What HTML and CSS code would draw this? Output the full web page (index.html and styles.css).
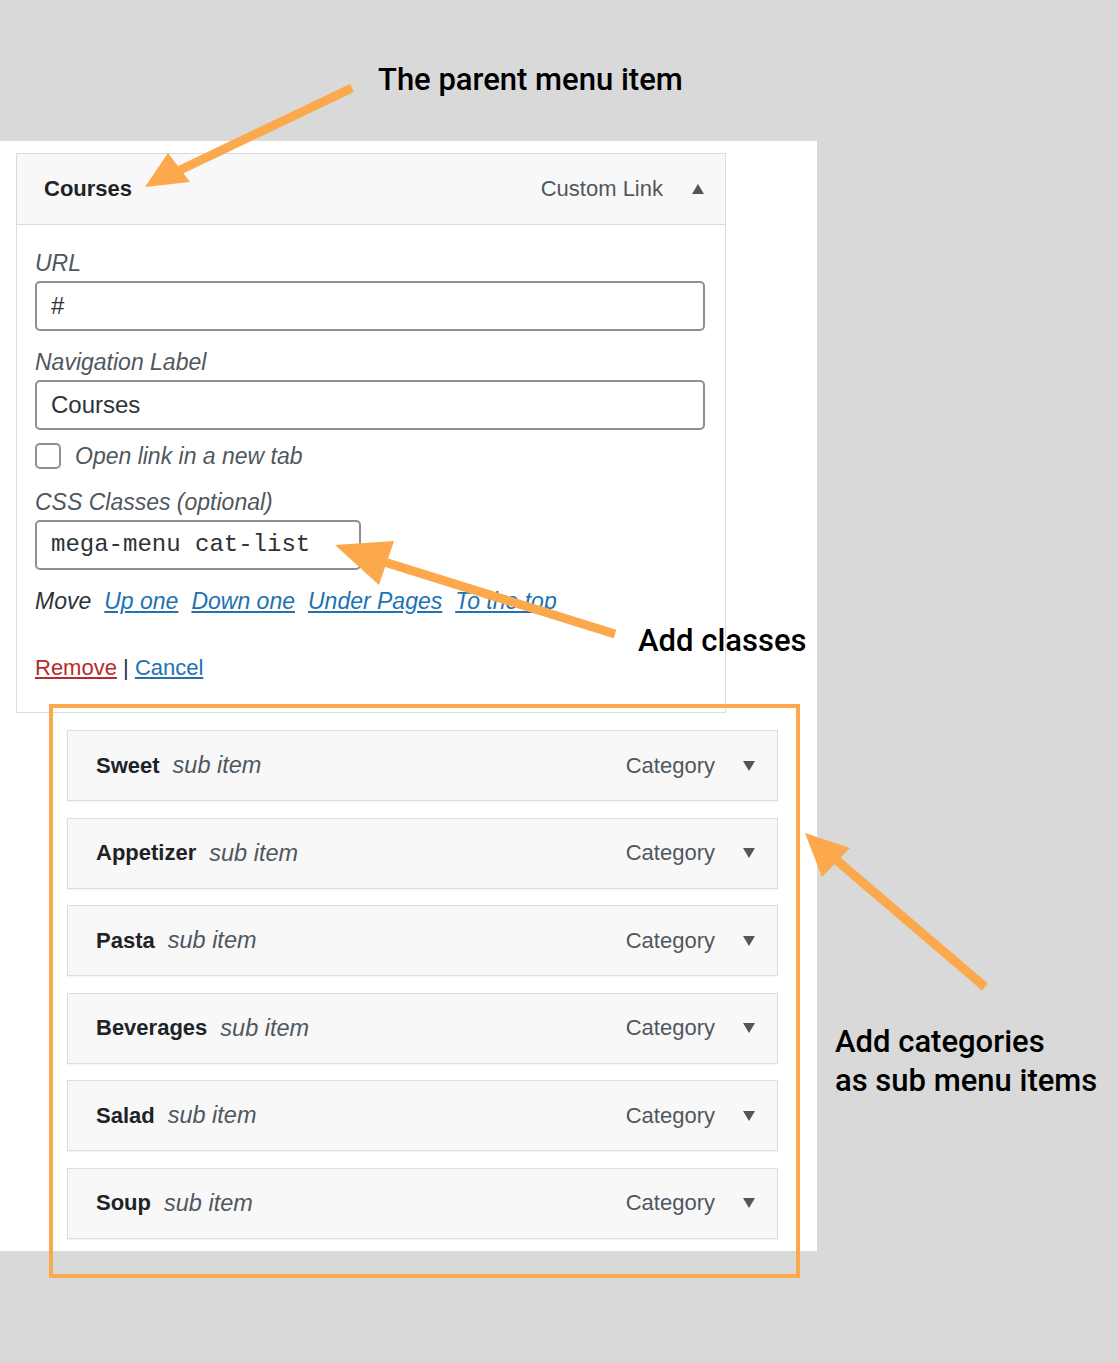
FILE: index.html
```html
<!DOCTYPE html>
<html>

<head>
  <meta name="viewport" content="width=device-width, initial-scale=1" />
  <link rel="stylesheet" href="styles.css">
</head>

<body>
  <div id="page">
    <div class="note-top">The parent menu item</div>

    <div class="panel">
      <!-- parent menu item, opened -->
      <div class="menu-item">
        <div class="item-bar">
          <span class="item-title">Courses</span>
          <span class="item-type">Custom Link</span>
          <span class="arrow-up"></span>
        </div>
        <div class="item-settings">
          <label class="field-label">URL</label>
          <div class="text-input">#</div>

          <label class="field-label">Navigation Label</label>
          <div class="text-input">Courses</div>

          <div class="check-row">
            <span class="checkbox"></span>
            <span class="field-label">Open link in a new tab</span>
          </div>

          <label class="field-label">CSS Classes (optional)</label>
          <div class="text-input code-input">mega-menu cat-list</div>

          <div class="move-row">
            <span>Move</span>
            <a href="#">Up one</a>
            <a href="#">Down one</a>
            <a href="#">Under Pages</a>
            <a href="#">To the top</a>
          </div>

          <div class="actions">
            <a href="#" class="remove">Remove</a> | <a href="#">Cancel</a>
          </div>
        </div>
      </div>

      <!-- sub menu items -->
      <div class="sub-list">
        <div class="sub-item"><b>Sweet</b><i>sub item</i><span class="item-type">Category</span><span class="arrow-down"></span></div>
        <div class="sub-item"><b>Appetizer</b><i>sub item</i><span class="item-type">Category</span><span class="arrow-down"></span></div>
        <div class="sub-item"><b>Pasta</b><i>sub item</i><span class="item-type">Category</span><span class="arrow-down"></span></div>
        <div class="sub-item"><b>Beverages</b><i>sub item</i><span class="item-type">Category</span><span class="arrow-down"></span></div>
        <div class="sub-item"><b>Salad</b><i>sub item</i><span class="item-type">Category</span><span class="arrow-down"></span></div>
        <div class="sub-item"><b>Soup</b><i>sub item</i><span class="item-type">Category</span><span class="arrow-down"></span></div>
      </div>
    </div>

    <!-- annotations drawn over the screenshot -->
    <div class="note note-classes">Add classes</div>
    <div class="note note-cats">Add categories<br>as sub menu items</div>
    <div class="highlight"></div>

    <svg class="arrows" width="1118" height="1363" viewBox="0 0 1118 1363">
      <g stroke="#fca84c" stroke-width="9" fill="none">
        <line x1="352" y1="88" x2="176" y2="172" />
        <line x1="615" y1="634" x2="378" y2="560" />
        <line x1="985" y1="987" x2="834" y2="858" />
      </g>
      <g fill="#fca84c">
        <polygon points="145,187 168,153 190,182" />
        <polygon points="335,545 394,541 379,585" />
        <polygon points="805,833 850,848 822,877" />
      </g>
    </svg>
  </div>
</body>

</html>
```

FILE: styles.css
```css
/* page + grey backdrop */
body {
  margin: 0;
  background: #d9d9d9;
  font-family: "Liberation Sans", Arial, sans-serif;
  color: #1d2327;
}

#page {
  position: relative;
  width: 1118px;
  height: 1363px;
  overflow: hidden;
}

.note-top,
.note {
  font-family: Roboto, "Noto Sans", sans-serif;
  font-weight: 500;
  font-size: 31px;
  color: #000;
}

.note-top {
  box-sizing: border-box;
  height: 141px;
  padding: 62px 0 0 378px;
  line-height: 36px;
}

.panel {
  width: 817px;
  background: #fff;
  padding: 12px 0;
}

/* parent item */
.menu-item {
  margin-left: 16px;
  width: 708px;
  border: 1px solid #dcdcde;
  background: #fff;
}

.item-bar {
  display: flex;
  align-items: center;
  height: 70px;
  padding: 0 21px 0 27px;
  background: #f8f8f8;
  border-bottom: 1px solid #dcdcde;
}

.item-title {
  font-weight: bold;
  font-size: 22px;
  flex: 1;
}

.item-type {
  font-size: 22px;
  color: #50575e;
}

.arrow-up {
  margin-left: 29px;
  width: 0;
  height: 0;
  border-left: 6px solid transparent;
  border-right: 6px solid transparent;
  border-bottom: 10px solid #50575e;
}

.arrow-down {
  margin-left: 28px;
  width: 0;
  height: 0;
  border-left: 6px solid transparent;
  border-right: 6px solid transparent;
  border-top: 10px solid #50575e;
}

.item-settings {
  padding: 26px 20px 31px 18px;
  display: flex;
  flex-direction: column;
}

.field-label {
  font-style: italic;
  font-size: 23px;
  line-height: 24px;
  color: #50575e;
}

.text-input {
  box-sizing: border-box;
  height: 50px;
  margin: 6px 0 19px;
  padding: 0 14px;
  border: 2px solid #8c8f94;
  border-radius: 5px;
  font-size: 24px;
  line-height: 46px;
  color: #2c3338;
}

.check-row {
  display: flex;
  align-items: center;
  gap: 14px;
  margin: -6px 0 21px;
}

.checkbox {
  box-sizing: border-box;
  width: 26px;
  height: 26px;
  border: 2px solid #8c8f94;
  border-radius: 5px;
}

.code-input {
  width: 326px;
  font-family: "Liberation Mono", "DejaVu Sans Mono", monospace;
  margin-bottom: 18px;
}

.move-row {
  display: flex;
  gap: 13px;
  font-style: italic;
  font-size: 23px;
  line-height: 26px;
  color: #2c3338;
}

.move-row a,
.actions a {
  color: #2271b1;
}

.actions {
  margin-top: 41px;
  font-size: 22px;
  line-height: 26px;
  color: #2c3338;
}

.actions a.remove {
  color: #b32d2e;
}

/* sub items list */
.sub-list {
  margin: 17px 0 0 67px;
  width: 711px;
  display: flex;
  flex-direction: column;
  gap: 16.6px;
}

.sub-item {
  box-sizing: border-box;
  display: flex;
  align-items: center;
  height: 71px;
  padding: 0 22px 0 28px;
  background: #f8f8f8;
  border: 1px solid #dcdcde;
  box-shadow: 0 1px 1px rgba(0, 0, 0, 0.04);
  font-size: 22px;
}

.sub-item b {
  color: #1d2327;
}

.sub-item i {
  flex: 1;
  margin-left: 13px;
  font-size: 23.5px;
  color: #50575e;
}

/* overlays */
.note-classes {
  position: absolute;
  left: 638px;
  top: 623px;
  line-height: 36px;
}

.note-cats {
  position: absolute;
  left: 835px;
  top: 1022px;
  line-height: 39px;
}

.highlight {
  position: absolute;
  left: 49px;
  top: 704px;
  width: 743px;
  height: 566px;
  border: 4px solid #fca84c;
}

.arrows {
  position: absolute;
  left: 0;
  top: 0;
}
```
